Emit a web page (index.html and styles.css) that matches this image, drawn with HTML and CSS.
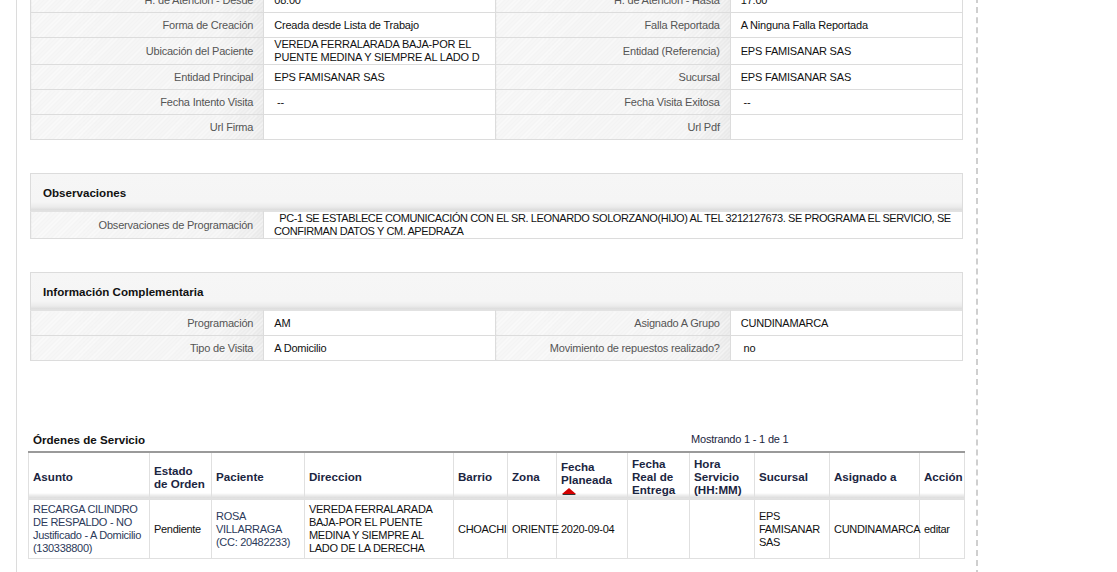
FILE: index.html
```html
<!DOCTYPE html>
<html lang="es">
<head>
<meta charset="utf-8">
<title>Detalle</title>
<link rel="stylesheet" href="styles.css">
</head>
<body>
<div class="page">
  <table class="detail">
    <colgroup><col class="c1"><col class="c2"><col class="c3"><col class="c4"></colgroup>
    <tr><td class="lbl">H. de Atención - Desde</td><td class="val">08:00</td><td class="lbl">H. de Atención - Hasta</td><td class="val">17:00</td></tr>
    <tr><td class="lbl">Forma de Creación</td><td class="val">Creada desde Lista de Trabajo</td><td class="lbl">Falla Reportada</td><td class="val">A Ninguna Falla Reportada</td></tr>
    <tr><td class="lbl">Ubicación del Paciente</td><td class="val">VEREDA FERRALARADA BAJA-POR EL PUENTE MEDINA Y SIEMPRE AL LADO D</td><td class="lbl">Entidad (Referencia)</td><td class="val">EPS FAMISANAR SAS</td></tr>
    <tr><td class="lbl">Entidad Principal</td><td class="val">EPS FAMISANAR SAS</td><td class="lbl">Sucursal</td><td class="val">EPS FAMISANAR SAS</td></tr>
    <tr><td class="lbl">Fecha Intento Visita</td><td class="val">&nbsp;--</td><td class="lbl">Fecha Visita Exitosa</td><td class="val">&nbsp;--</td></tr>
    <tr><td class="lbl">Url Firma</td><td class="val"></td><td class="lbl">Url Pdf</td><td class="val"></td></tr>
  </table>

  <section class="box">
    <div class="box-head">Observaciones</div>
    <table class="detail inner">
      <colgroup><col class="c1"><col></colgroup>
      <tr><td class="lbl">Observaciones de Programación</td><td class="val obs">&nbsp; PC-1 SE ESTABLECE COMUNICACIÓN CON EL SR. LEONARDO SOLORZANO(HIJO) AL TEL 3212127673. SE PROGRAMA EL SERVICIO, SE CONFIRMAN DATOS Y CM. APEDRAZA</td></tr>
    </table>
  </section>

  <section class="box">
    <div class="box-head">Información Complementaria</div>
    <table class="detail inner">
      <colgroup><col class="c1"><col class="c2"><col class="c3"><col class="c4"></colgroup>
      <tr><td class="lbl">Programación</td><td class="val">AM</td><td class="lbl">Asignado A Grupo</td><td class="val">CUNDINAMARCA</td></tr>
      <tr><td class="lbl">Tipo de Visita</td><td class="val">A Domicilio</td><td class="lbl">Movimiento de repuestos realizado?</td><td class="val">&nbsp;no</td></tr>
    </table>
  </section>

  <div class="orders-title">
    <span class="ot-name">Órdenes de Servicio</span>
    <span class="ot-count">Mostrando 1 - 1 de 1</span>
  </div>
  <table class="orders">
    <colgroup>
      <col style="width:121px"><col style="width:62px"><col style="width:93px"><col style="width:149px">
      <col style="width:54px"><col style="width:49px"><col style="width:71px"><col style="width:62px">
      <col style="width:65px"><col style="width:75px"><col style="width:90px"><col style="width:45px">
    </colgroup>
    <thead>
      <tr>
        <th>Asunto</th>
        <th>Estado de Orden</th>
        <th>Paciente</th>
        <th>Direccion</th>
        <th>Barrio</th>
        <th>Zona</th>
        <th class="sorted">Fecha Planeada<span class="arrow"></span></th>
        <th>Fecha Real de Entrega</th>
        <th>Hora Servicio (HH:MM)</th>
        <th>Sucursal</th>
        <th>Asignado a</th>
        <th>Acción</th>
      </tr>
    </thead>
    <tbody>
      <tr>
        <td class="link">RECARGA CILINDRO DE RESPALDO - NO Justificado - A Domicilio (130338800)</td>
        <td>Pendiente</td>
        <td class="link">ROSA VILLARRAGA (CC: 20482233)</td>
        <td>VEREDA FERRALARADA BAJA-POR EL PUENTE MEDINA Y SIEMPRE AL LADO DE LA DERECHA</td>
        <td>CHOACHI</td>
        <td>ORIENTE</td>
        <td>2020-09-04</td>
        <td></td>
        <td></td>
        <td>EPS FAMISANAR SAS</td>
        <td>CUNDINAMARCA</td>
        <td>editar</td>
      </tr>
    </tbody>
  </table>
</div>
</body>
</html>
```

FILE: styles.css
```css
html, body {
  margin: 0;
  padding: 0;
  background: #fff;
}
body {
  font-family: "Liberation Sans", Arial, sans-serif;
  font-size: 11px;
  letter-spacing: -0.2px;
  color: #111;
}
.page {
  margin: -13px 0 0 16px;
  width: 932px;
  padding: 0 14px 60px 13px;
  border-left: 1px solid #dcdcdc;
  border-right: 2px dashed #cfcfcf;
  min-height: 700px;
}
.detail {
  border-collapse: collapse;
  table-layout: fixed;
  width: 933px;
}
.detail col.c1 { width: 233px; }
.detail col.c2 { width: 232px; }
.detail col.c3 { width: 234px; }
.detail col.c4 { width: 232px; }
.detail td {
  border: 1px solid #dcdcdc;
  height: 24px;
  line-height: 13px;
  padding: 0 10px;
  vertical-align: middle;
}
.detail td.lbl {
  text-align: right;
  color: #555;
  padding-right: 10px;
  background:
    repeating-linear-gradient(135deg, rgba(255,255,255,0.55) 0 1px, rgba(255,255,255,0) 1px 3px),
    linear-gradient(to right, #f4f4f4 0, #f2f2f2 80%, #e8e8e8 100%);
}
.detail td.val {
  color: #111;
  background: #fff;
  padding-right: 3px;
}
.detail td.val.obs {
  letter-spacing: -0.4px;
  padding-right: 2px;
}
.box {
  margin-top: 33px;
  width: 931px;
  border: 1px solid #dcdcdc;
}
.box-head {
  height: 37px;
  line-height: 37px;
  padding-left: 12px;
  font-size: 11.6px;
  font-weight: bold;
  letter-spacing: 0;
  color: #111;
  background: linear-gradient(to bottom, #f6f6f6 0, #f5f5f5 28px, #ebebeb 33px, #dcdcdc 36px, #e6e6e6 37px);
}
.detail.inner {
  width: 933px;
  margin: 0 -1px -1px -1px;
}
.detail.inner td {
  border-top-color: #e2e2e2;
}
.orders-title {
  display: flex;
  align-items: center;
  margin: 71px 0 5px -2px;
  width: 936px;
  height: 14px;
}
.ot-name {
  flex: 1;
  padding-left: 5px;
  font-size: 11.6px;
  font-weight: bold;
  letter-spacing: 0;
  color: #111;
}
.ot-count {
  width: 273px;
  color: #1b2541;
}
.orders {
  margin-left: -2px;
  border-collapse: collapse;
  table-layout: fixed;
  width: 937px;
  border-top: 2px solid #9a9a9a;
}
.orders th {
  border: 1px solid #e0e0e0;
  border-top: none;
  text-align: left;
  font-size: 11.6px;
  font-weight: bold;
  letter-spacing: 0;
  color: #1b2541;
  line-height: 13px;
  padding: 4px 3px 3px 4px;
  vertical-align: middle;
  background: linear-gradient(to bottom, #fff 0, #fff 40px, #efefef 42px, #dcdcdc 45px, #e8e8e8 46px);
}
.arrow {
  display: block;
  width: 0;
  height: 0;
  margin: 2px 0 0 1px;
  border-left: 7px solid transparent;
  border-right: 7px solid transparent;
  border-bottom: 6px solid #d40000;
  filter: drop-shadow(0 1px 0 #333);
}
.orders td {
  border: 1px solid #e0e0e0;
  line-height: 13px;
  padding: 3px 1px 3px 4px;
  vertical-align: middle;
  letter-spacing: -0.3px;
  color: #111;
}
.orders td.link {
  color: #2c3a5a;
}
```
